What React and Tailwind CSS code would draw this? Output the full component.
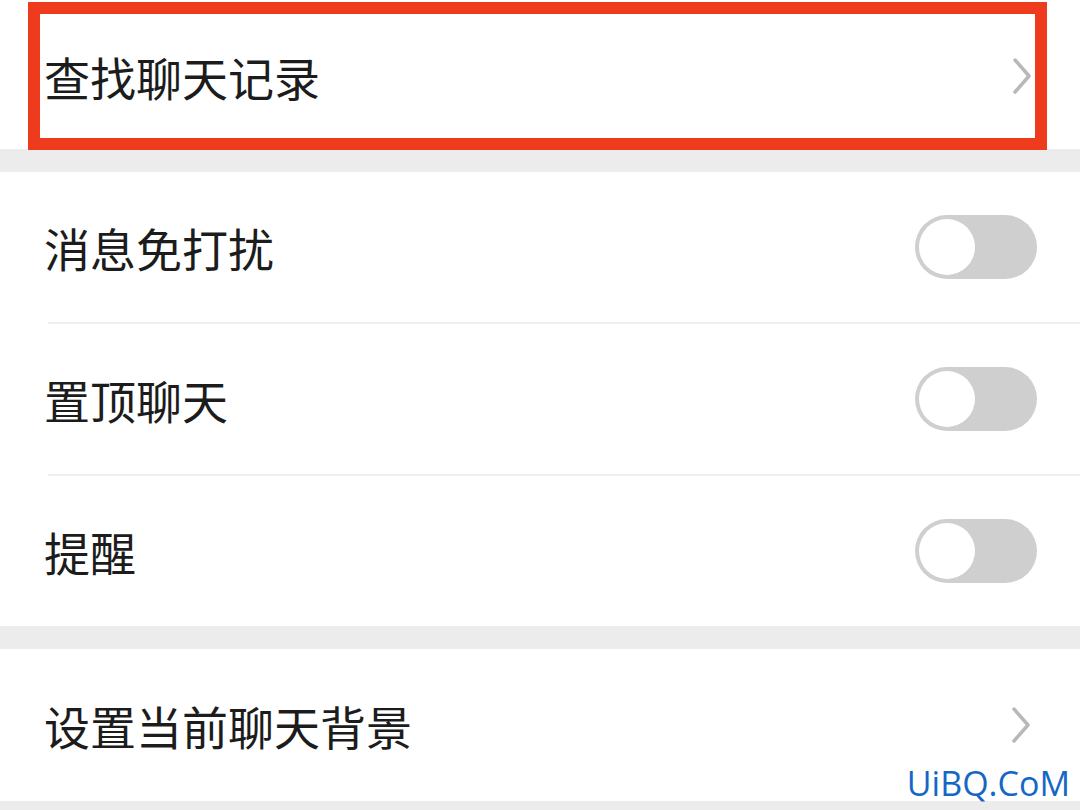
import React from "react";

const Chevron = () => (
  <svg width="22" height="38" viewBox="0 0 22 38" fill="none">
    <path d="M4 3 L18 19 L4 35" stroke="#b8b8b8" strokeWidth="3.5" strokeLinecap="round" strokeLinejoin="round" />
  </svg>
);

const Toggle = () => (
  <div className="w-[122px] h-[64px] rounded-full bg-[#cfcfcf] p-[4px] flex items-center">
    <div className="w-[56px] h-[56px] rounded-full bg-white" />
  </div>
);

const Row = ({ label, right, divider }) => (
  <div className="bg-white">
    <div className="h-[150px] flex items-center justify-between pl-[44px] pr-[43px]">
      <span className="text-[46px] leading-none text-[#1c1c1c]">{label}</span>
      {right}
    </div>
    {divider && <div className="ml-[48px] h-[2px] bg-[#efefef]" />}
  </div>
);

const App = () => {
  return (
    <div
      className="relative w-[1080px] h-[810px] overflow-hidden bg-[#ececec]"
      style={{ fontFamily: '"Noto Sans CJK SC", "Noto Sans", sans-serif' }}
    >
      <div className="h-[149px] bg-white pt-[2px]">
        <div className="ml-[28px] mr-[33px] h-[148px] border-[12px] border-[#ef3b1d] flex items-center justify-between pl-[4px] pr-[2px]">
          <span className="text-[46px] leading-none text-[#1c1c1c]">查找聊天记录</span>
          <Chevron />
        </div>
      </div>
      <div className="h-[23px]" />
      <Row label="消息免打扰" right={<Toggle />} divider />
      <Row label="置顶聊天" right={<Toggle />} divider />
      <Row label="提醒" right={<Toggle />} />
      <div className="h-[23px]" />
      <div className="bg-white h-[152px] flex items-center justify-between pl-[44px] pr-[48px]">
        <span className="text-[46px] leading-none text-[#1c1c1c]">设置当前聊天背景</span>
        <Chevron />
      </div>
      <div
        className="absolute right-[10px] top-[766px] text-[34px] leading-none text-[#1567c6]"
        style={{ fontFamily: '"Open Sans", sans-serif' }}
      >
        UiBQ.CoM
      </div>
    </div>
  );
};

export default App;
